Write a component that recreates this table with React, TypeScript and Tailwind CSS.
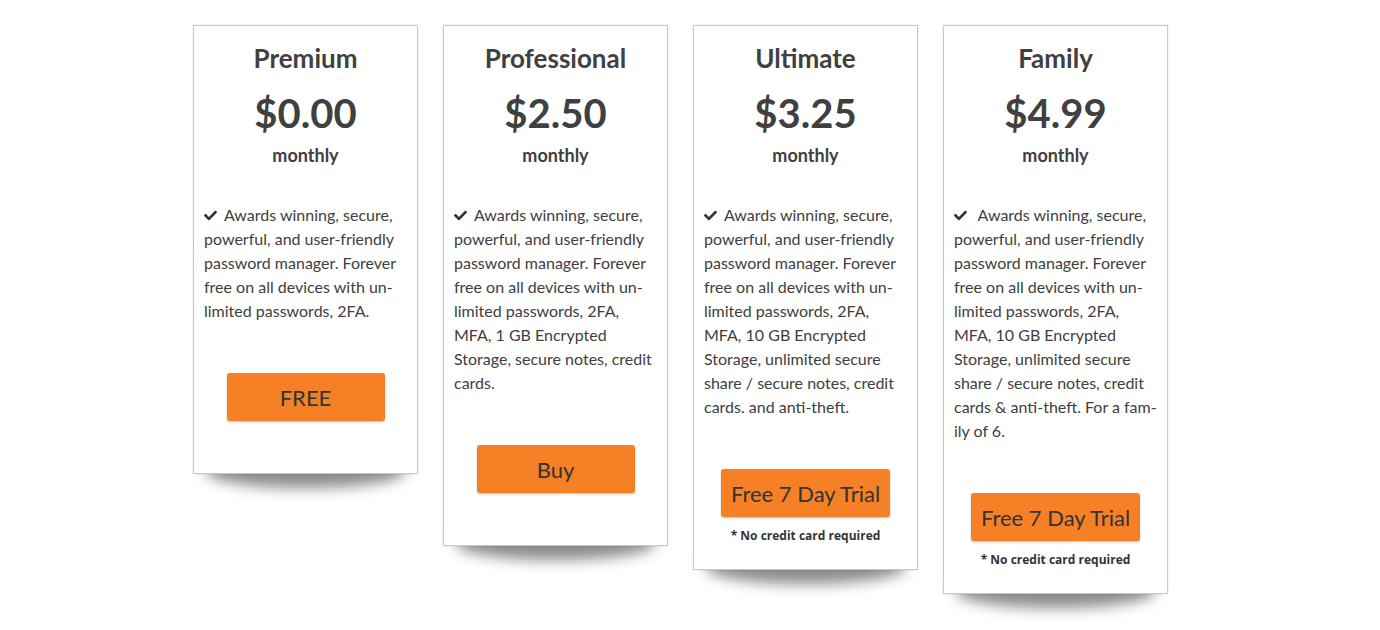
import { FaCheck } from 'react-icons/fa'

type Plan = {
    name: string
    price: string
    text: string
    button: string
    note?: boolean
    extraSpace?: boolean
}

const plans: Plan[] = [
    {
        name: 'Premium',
        price: '$0.00',
        text: 'Awards winning, secure, powerful, and user-friendly password manager. Forever free on all devices with un\u00ADlimited passwords, 2FA.',
        button: 'FREE',
    },
    {
        name: 'Professional',
        price: '$2.50',
        text: 'Awards winning, secure, powerful, and user-friendly password manager. Forever free on all devices with un\u00ADlimited passwords, 2FA, MFA, 1 GB Encrypted Storage, secure notes, credit cards.',
        button: 'Buy',
    },
    {
        name: 'Ultimate',
        price: '$3.25',
        text: 'Awards winning, secure, powerful, and user-friendly password manager. Forever free on all devices with un\u00ADlimited passwords, 2FA, MFA, 10 GB Encrypted Storage, unlimited secure share / secure notes, credit cards. and anti-theft.',
        button: 'Free 7 Day Trial',
        note: true,
    },
    {
        name: 'Family',
        price: '$4.99',
        text: 'Awards winning, secure, powerful, and user-friendly password manager. Forever free on all devices with un\u00ADlimited passwords, 2FA, MFA, 10 GB Encrypted Storage, unlimited secure share / secure notes, credit cards & anti-theft. For a fam\u00ADily of 6.',
        button: 'Free 7 Day Trial',
        note: true,
        extraSpace: true,
    },
]

const PlanCard = ({ plan }: { plan: Plan }) => {
    return (
        <div className="relative w-[225px]">
            {/* curved shadow under card */}
            <div className="absolute left-[12px] right-[12px] bottom-[-14px] h-[34px] rounded-[50%] bg-black/45 blur-[7px]" />

            <div className="relative bg-white border border-[#c9c9c9] shadow-[0_0_2px_rgba(0,0,0,0.12)] pt-[14px] px-[10px] flex flex-col">
                <h2 className="text-center text-[26px] leading-[36px] font-bold text-[#404040]">{plan.name}</h2>
                <div className="text-center text-[40px] leading-[48px] font-bold text-[#404040] mt-[13px]">{plan.price}</div>
                <div className="text-center text-[18px] leading-[24px] font-bold text-[#404040] mt-[6px]">monthly</div>

                <p className="mt-[36px] text-[16px] leading-[24px] text-[#404040] hyphens-manual">
                    <FaCheck className="inline-block w-[13px] h-[13px] -mt-[3px] mr-[7px] text-[#333]" />
                    {plan.extraSpace ? '\u00A0' : ''}
                    {plan.text}
                </p>

                <div className="flex justify-center mt-[50px]">
                    <button className="min-w-[158px] h-[48px] px-[10px] bg-[#f58025] rounded-[3px] shadow-[0_1px_2px_rgba(0,0,0,0.25)] text-[22px] text-[#333]">
                        {plan.button}
                    </button>
                </div>

                <div className="h-[52px]">
                    {plan.note && (
                        <div className="pt-[11px] text-center text-[12px] leading-[16px] font-bold text-[#333] font-['Open_Sans',sans-serif]">
                            * No credit card required
                        </div>
                    )}
                </div>
            </div>
        </div>
    )
}

export default function App() {
    return (
        <div className="min-h-[630px] bg-white font-['Lato',sans-serif]">
            <div className="flex justify-center items-start gap-[25px] pt-[25px] pr-[19px]">
                {plans.map(p => (
                    <PlanCard key={p.name} plan={p} />
                ))}
            </div>
        </div>
    )
}
